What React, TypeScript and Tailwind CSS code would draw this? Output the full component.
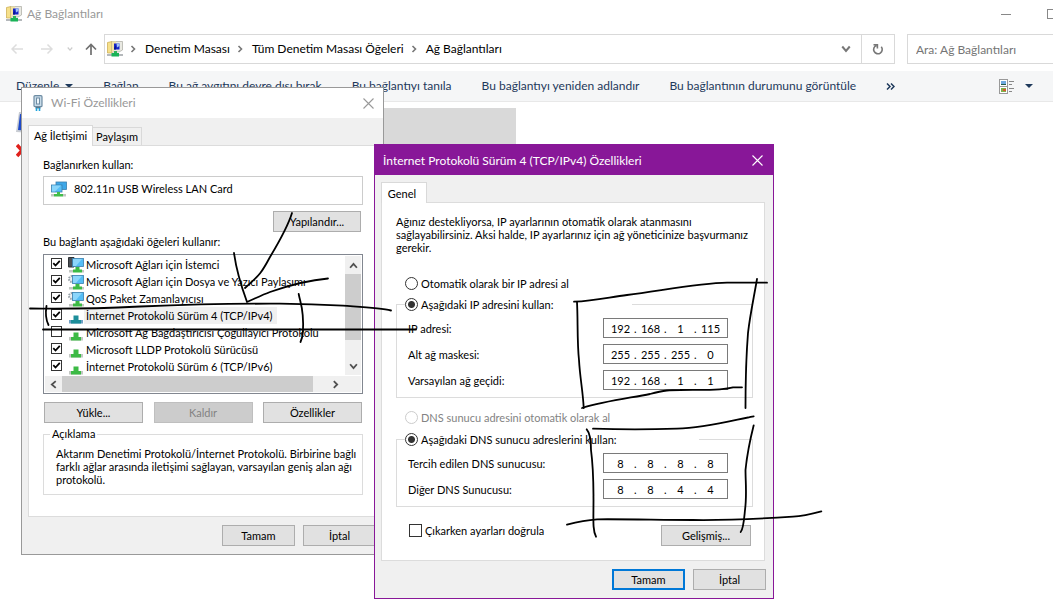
import { ReactNode, useId } from 'react';

const Chevron = ({ d, size = 8, className = '' }: { d: string; size?: number; className?: string }) => (
  <svg width={size} height={size} viewBox="0 0 8 8" fill="none" stroke="currentColor" strokeWidth="1.6" className={className}>
    <path d={d} />
  </svg>
);

const UP = 'M1 6L4 2.5L7 6';
const DOWN = 'M1 2L4 5.5L7 2';
const LEFT = 'M6 1L2.5 4L6 7';
const RIGHT = 'M2.5 1L5.5 4L2.5 7';

const FolderNetworkIcon = () => (
  <svg width="16" height="16" viewBox="0 0 16 16" className="shrink-0">
    <path d="M0.5 1.5L5 0.5V12H0.5Z" fill="#f6e08a" stroke="#c9a94a" strokeWidth="0.7" />
    <path d="M5 0.5H15.5V9L12 11H5Z" fill="#e9e9e2" stroke="#a9a9a0" strokeWidth="0.7" />
    <path d="M5 0.5H9V4L6 11H5Z" fill="#f3e3a0" />
    <rect x="7" y="2.5" width="5.5" height="6" fill="#1523c8" />
    <path d="M9.5 2.5H12.5V5L10 6.5Z" fill="#9fc0f5" />
    <path d="M7 7L9 4.5V8.5H7Z" fill="#0a1690" />
    <path d="M7 10H10V12.5H7Z" fill="#2fb457" />
    <rect x="0" y="13" width="16" height="2" fill="#b4b8bb" />
    <rect x="4.5" y="12" width="7.5" height="3.5" fill="#19b357" />
  </svg>
);

const MonitorsIcon = () => (
  <svg width="16" height="16" viewBox="0 0 16 16" className="shrink-0">
    <rect x="5" y="1" width="10.5" height="7.5" fill="#3da7e8" stroke="#3a7fae" strokeWidth="0.8" />
    <rect x="0.5" y="4" width="10.5" height="7" fill="#56bff7" stroke="#3a7fae" strokeWidth="0.8" />
    <path d="M1 4.5H10L4 10.5H1Z" fill="#8ad6fb" />
    <path d="M6 11H9V13H12V15.5H3V13H6Z" fill="#43bd4a" />
    <path d="M0 13H3V15.5H0ZM12 13H15V15.5H12Z" fill="#c3c7c3" />
  </svg>
);

const ClientIcon = ({ gear = false }: { gear?: boolean }) => (
  <svg width="16" height="16" viewBox="0 0 16 16" className="shrink-0">
    {gear ? (
      <circle cx="4" cy="5" r="3" fill="#eef1f3" stroke="#9aa3aa" strokeWidth="2" strokeDasharray="1.5 1" />
    ) : (
      <path d="M0.5 0.5H6V10H0.5Z" fill="#4a4f55" stroke="#2e3236" />
    )}
    <rect x="4.5" y="1.5" width="11" height="8" fill="#55bdf5" stroke="#3a7fae" strokeWidth="0.8" />
    <path d="M5 2H14L8 9H5Z" fill="#8cd6fb" />
    <path d="M7.5 10H11.5V12.5H14V15.5H5V12.5H7.5Z" fill="#3cba45" />
    <path d="M1 13H5V15.5H1ZM14 13H16V15.5H14Z" fill="#c3c7c3" />
  </svg>
);

const ProtocolIcon = ({ active = false }: { active?: boolean }) => (
  <svg width="16" height="16" viewBox="0 0 16 16" className="shrink-0">
    <rect x="1" y="12" width="14" height="3.5" fill={active ? '#6f9fc4' : '#c3c7c3'} />
    <path d="M5.5 7.5H10.5V12H13V15.5H3V12H5.5Z" fill={active ? '#1d8e9a' : '#3cba45'} />
  </svg>
);

const AdapterIcon = () => (
  <svg width="10" height="16" viewBox="0 0 10 16" className="shrink-0">
    <rect x="1" y="0.7" width="8" height="11" rx="1" fill="#c8dbe8" stroke="#6e8ca3" strokeWidth="1.2" />
    <rect x="3.5" y="3" width="3" height="6" fill="#eef6fb" stroke="#6e8ca3" />
    <path d="M2.5 12H7.5V13.5H2.5Z" fill="#54798f" />
    <path d="M3.5 13V16M6.5 13V16" stroke="#1ea4dc" strokeWidth="1.6" />
  </svg>
);

const CloseIcon = () => (
  <svg width="11" height="11" viewBox="0 0 11 11" stroke="currentColor" strokeWidth="1.1">
    <path d="M0.5 0.5L10.5 10.5M10.5 0.5L0.5 10.5" />
  </svg>
);

const PushButton = ({ children, className, disabled }: { children: ReactNode; className: string; disabled?: boolean }) => (
  <button
    type="button"
    className={`flex h-[21px] items-center justify-center border border-[#adadad] bg-[#e1e1e1] disabled:border-[#bfbfbf] disabled:bg-[#cccccc] disabled:text-[#838383] ${className}`}
    disabled={disabled}
  >
    {children}
  </button>
);

const CheckBox = ({ checked, id, className }: { checked?: boolean; id: string; className: string }) => (
  <span className={`relative block shrink-0 ${className}`}>
    <input id={id} type="checkbox" defaultChecked={checked} className="peer block size-full appearance-none border border-[#333] bg-white" />
    <svg viewBox="0 0 11 11" fill="none" stroke="#000" strokeWidth="1.8" className="pointer-events-none absolute inset-0 hidden peer-checked:block">
      <path d="M2.3 5.2L4.5 7.5L8.8 2.8" />
    </svg>
  </span>
);

const Radio = ({ label, name, checked, disabled }: { label: string; name: string; checked?: boolean; disabled?: boolean }) => (
  <label className={`flex h-4 items-center gap-[3px] whitespace-nowrap ${disabled ? 'text-[#838383]' : ''}`}>
    <input
      type="radio"
      name={name}
      defaultChecked={checked}
      disabled={disabled}
      className="size-[13px] shrink-0 appearance-none rounded-full border border-[#333] bg-white checked:bg-[radial-gradient(circle,#333_0_3px,#fff_4px)] disabled:border-[#ccc]"
    />
    {label}
  </label>
);

const AddressField = ({ label, octets }: { label: string; octets: number[] }) => (
  <div role="group" aria-label={label} className="flex h-5 items-center justify-between">
    <span>{label}</span>
    <div className="flex h-5 w-[125px] items-center border border-[#7a7a7a] bg-white pl-[3px]">
      {octets.map((octet, i) => (
        <span key={i} className="flex items-center">
          {i > 0 && <span className="w-[3px]">.</span>}
          <input aria-label={`${label} ${i + 1}`} defaultValue={octet} className="h-4 w-[27px] text-center outline-none" />
        </span>
      ))}
    </div>
  </div>
);

const commands = ['Bağlan', 'Bu ağ aygıtını devre dışı bırak', 'Bu bağlantıyı tanıla', 'Bu bağlantıyı yeniden adlandır', 'Bu bağlantının durumunu görüntüle'];

const Explorer = () => (
  <div className="w-[calc(100%+68px)] text-[12px]">
    <header className="flex h-7 items-center pl-[6px] text-[#999]">
      <FolderNetworkIcon />
      <h1 className="ml-[5px] flex-1">Ağ Bağlantıları</h1>
      <button type="button" aria-label="Simge durumuna küçült" className="flex w-[46px] justify-center">
        <span className="h-px w-[10px] bg-[#888]" />
      </button>
      <button type="button" aria-label="Ekranı kapla" className="flex w-[46px] justify-center">
        <span className="size-[10px] border border-[#888]" />
      </button>
      <button type="button" aria-label="Kapat" className="flex w-[46px] justify-center"><CloseIcon /></button>
    </header>

    {/* Address bar */}
    <div className="flex items-center pt-[6px] pb-[7px] pr-3 pl-[11px]">
      <button type="button" aria-label="Geri" className="text-[#ddd]">
        <svg width="12" height="12" viewBox="0 0 12 12" fill="none" stroke="currentColor" strokeWidth="1.5"><path d="M12 6H1M5.5 1.5L1 6L5.5 10.5" /></svg>
      </button>
      <button type="button" aria-label="İleri" className="ml-[18px] text-[#ddd]">
        <svg width="12" height="12" viewBox="0 0 12 12" fill="none" stroke="currentColor" strokeWidth="1.5"><path d="M0 6H11M6.5 1.5L11 6L6.5 10.5" /></svg>
      </button>
      <button type="button" aria-label="Son konumlar" className="ml-[14px] text-[#ccc]"><Chevron d={DOWN} size={6} /></button>
      <button type="button" aria-label="Yukarı" className="ml-[12px] text-[#707070]">
        <svg width="12" height="12" viewBox="0 0 12 12" fill="none" stroke="currentColor" strokeWidth="1.7"><path d="M6 12V1.5M1 6.5L6 1.5L11 6.5" /></svg>
      </button>
      <nav className="ml-[7px] flex h-[30px] flex-1 items-center border border-[#d9d9d9] pl-[2px] text-black">
        <FolderNetworkIcon />
        {['Denetim Masası', 'Tüm Denetim Masası Öğeleri', 'Ağ Bağlantıları'].map((crumb) => (
          <span key={crumb} className="flex items-center">
            <Chevron d={RIGHT} className="mr-2 ml-[6px] text-[#777]" />
            <a href="#" className="whitespace-nowrap">{crumb}</a>
          </span>
        ))}
        <button type="button" aria-label="Önceki konumlar" className="ml-auto mr-[10px] text-[#777]"><Chevron d={DOWN} size={10} /></button>
        <button type="button" aria-label="Yenile" className="flex h-full w-[33px] items-center justify-center border-l border-[#d9d9d9] text-[#777]">
          <svg width="12" height="12" viewBox="0 0 12 12" fill="none" stroke="currentColor" strokeWidth="1.6">
            <path d="M9.3 3.8A4.3 4.3 0 1 1 4.3 2.5M1.5 1.8H5.4V5.6" />
          </svg>
        </button>
      </nav>
      <input
        type="search"
        aria-label="Ara"
        placeholder="Ara: Ağ Bağlantıları"
        className="ml-3 h-[30px] w-[202px] border border-[#d9d9d9] px-2 outline-none placeholder:text-[#757575]"
      />
    </div>

    {/* Command bar */}
    <div className="flex h-[31px] items-center gap-[30px] border-b border-[#e8e8e8] bg-[#f5f6f7] pr-[88px] pl-4 text-[#1e395b]">
      <button type="button" className="flex items-center gap-[6px]">
        Düzenle
        <svg width="8" height="4" viewBox="0 0 8 4" fill="currentColor"><path d="M0 0H8L4 4Z" /></svg>
      </button>
      {commands.map((c) => (
        <button key={c} type="button" className="whitespace-nowrap">{c}</button>
      ))}
      <button type="button" aria-label="Diğer komutlar">
        <svg width="9" height="7" viewBox="0 0 9 7" fill="none" stroke="currentColor" strokeWidth="1.5"><path d="M1 0.5L4 3.5L1 6.5M5 0.5L8 3.5L5 6.5" /></svg>
      </button>
      <button type="button" aria-label="Görünüm" className="ml-auto flex items-center gap-[10px]">
        <svg width="16" height="15" viewBox="0 0 16 15">
          <rect x="0.5" y="0.5" width="8" height="14" fill="#fff" stroke="#999" />
          <path d="M0 7.5H9" stroke="#999" />
          <rect x="2" y="2" width="5" height="4" fill="#6fa8e0" />
          <path d="M2 5H7V6H2Z" fill="#245a48" />
          <rect x="2" y="9" width="5" height="4" fill="#7fb04a" />
          <path d="M4 10H7V12H4Z" fill="#d65a2c" />
          <path d="M10 2.5H15M10 5.5H13M10 9.5H15M10 12.5H13" stroke="#888" />
        </svg>
        <svg width="8" height="4" viewBox="0 0 8 4" fill="currentColor"><path d="M0 0H8L4 4Z" /></svg>
      </button>
    </div>

    {/* Connection tiles */}
    <div className="flex pt-[6px] pl-4">
      <svg width="54" height="52" viewBox="0 0 54 52">
        <path d="M3 4L30 6V26L0 24Z" fill="#c9cdd3" />
        <path d="M4 6L28 8V24L2 22Z" fill="#1d49c9" />
        <path d="M1 37L11 48M11 37L1 48" stroke="#e0201b" strokeWidth="3.5" />
      </svg>
      <div className="ml-[200px] h-[70px] w-[246px] bg-[#d9d9d9]" />
    </div>
  </div>
);

const items = [
  { name: 'Microsoft Ağları için İstemci', icon: <ClientIcon />, checked: true },
  { name: 'Microsoft Ağları için Dosya ve Yazıcı Paylaşımı', icon: <ClientIcon gear />, checked: true },
  { name: 'QoS Paket Zamanlayıcısı', icon: <ClientIcon gear />, checked: true },
  { name: 'İnternet Protokolü Sürüm 4 (TCP/IPv4)', icon: <ProtocolIcon active />, checked: true, selected: true },
  { name: 'Microsoft Ağ Bağdaştırıcısı Çoğullayıcı Protokolü', icon: <ProtocolIcon /> },
  { name: 'Microsoft LLDP Protokolü Sürücüsü', icon: <ProtocolIcon />, checked: true },
  { name: 'İnternet Protokolü Sürüm 6 (TCP/IPv6)', icon: <ProtocolIcon />, checked: true },
];

const WifiDialog = () => {
  const id = useId();
  return (
    <section className="absolute top-[87px] left-[21px] w-[363px] border border-[#999] bg-[#f0f0f0] text-[11px] leading-[14px] text-black">
      <header className="flex h-[30px] items-center bg-white pr-[9px] pl-[11px] text-[12px] text-[#999]">
        <AdapterIcon />
        <h2 className="ml-2 flex-1">Wi-Fi Özellikleri</h2>
        <button type="button" aria-label="Kapat"><CloseIcon /></button>
      </header>

      <div className="px-[6px] pt-[7px] pb-2">
        <div role="tablist" className="flex items-end">
          <button type="button" role="tab" aria-selected="true" className="z-10 -mb-px h-[21px] w-[65px] whitespace-nowrap border border-b-0 border-[#d9d9d9] bg-white">Ağ İletişimi</button>
          <button type="button" role="tab" aria-selected="false" className="h-[18px] w-[49px] border border-b-0 border-l-0 border-[#d9d9d9]">Paylaşım</button>
        </div>
        <div className="border border-[#dcdcdc] bg-white pt-3 pr-[13px] pb-[21px] pl-[14px]">
          <label htmlFor={`${id}-nic`} className="block">Bağlanırken kullan:</label>
          <div className="mt-1 flex h-[29px] items-center gap-[7px] border border-[#ccc] pb-1 pl-[7px]">
            <MonitorsIcon />
            <input id={`${id}-nic`} readOnly defaultValue="802.11n USB Wireless LAN Card" className="flex-1 outline-none" />
          </div>
          <PushButton className="mt-[6px] mr-[2px] ml-auto w-[88px]">Yapılandır...</PushButton>
          <p className="mt-[3px]">Bu bağlantı aşağıdaki öğeleri kullanır:</p>

          <div className="mt-[5px] border border-[#828790] p-px">
            <div className="flex">
              <ul className="flex-1 pl-[6px]">
                {items.map((item, i) => (
                  <li key={item.name} className="flex h-[17px] items-center">
                    <CheckBox id={`${id}-${i}`} checked={item.checked} className="mb-[2px] size-[11px]" />
                    <span className="ml-[6px] flex">{item.icon}</span>
                    <label htmlFor={`${id}-${i}`} className={`h-[17px] whitespace-nowrap px-[2px] pt-[2px] ${item.selected ? 'bg-[#f0f0f0] pr-[5px]' : ''}`}>{item.name}</label>
                  </li>
                ))}
              </ul>
              <div className="flex w-4 flex-col items-center bg-[#f0f0f0] text-[#505050]">
                <span className="flex h-[18px] items-center"><Chevron d={UP} size={9} /></span>
                <div className="h-[66px] w-full bg-[#cdcdcd]" />
                <span className="mt-auto flex h-[18px] items-center"><Chevron d={DOWN} size={9} /></span>
              </div>
            </div>
            <div className="mt-px flex h-4 items-center bg-[#f0f0f0] text-[#505050]">
              <span className="flex w-[17px] justify-center"><Chevron d={LEFT} size={9} /></span>
              <div className="h-4 w-[251px] bg-[#cdcdcd]" />
              <Chevron d={RIGHT} size={9} className="ml-[18px]" />
            </div>
          </div>

          <div className="mt-2 flex justify-between px-px">
            <PushButton className="w-[99px]">Yükle...</PushButton>
            <PushButton className="w-[99px]" disabled>Kaldır</PushButton>
            <PushButton className="w-[99px]">Özellikler</PushButton>
          </div>

          <fieldset className="mt-1 min-w-0 border border-[#dcdcdc] px-3 pt-[6px] pb-2 leading-[13px] whitespace-nowrap">
            <legend className="-ml-[6px] h-[14px] px-[2px]">Açıklama</legend>
            Aktarım Denetimi Protokolü/İnternet Protokolü. Birbirine bağlı<br />
            farklı ağlar arasında iletişimi sağlayan, varsayılan geniş alan ağı<br />
            protokolü.
          </fieldset>
        </div>
        <div className="mt-2 flex justify-end gap-2 pr-px">
          <PushButton className="w-[73px]">Tamam</PushButton>
          <PushButton className="w-[73px]">İptal</PushButton>
        </div>
      </div>
    </section>
  );
};

const Ipv4Dialog = () => {
  const id = useId();
  return (
    <section className="absolute top-[144px] left-[374px] w-[400px] border border-[#881798] bg-[#f0f0f0] text-[11px] leading-[13px] text-black">
      <header className="flex h-[30px] items-center bg-[#881798] pr-[10px] pl-2 text-[12px] text-white">
        <h2 className="flex-1">İnternet Protokolü Sürüm 4 (TCP/IPv4) Özellikleri</h2>
        <button type="button" aria-label="Kapat"><CloseIcon /></button>
      </header>

      <div className="pt-[7px] pr-[7px] pb-2 pl-[6px]">
        <div role="tablist" className="flex">
          <button type="button" role="tab" aria-selected="true" className="z-10 -mb-px h-[21px] w-[46px] border border-b-0 border-[#d9d9d9] bg-white pr-1">Genel</button>
        </div>
        <div className="mr-px border border-[#dcdcdc] bg-white pt-3 pr-[11px] pb-[14px] pl-[14px]">
          <p className="whitespace-nowrap">
            Ağınız destekliyorsa, IP ayarlarının otomatik olarak atanmasını<br />
            sağlayabilirsiniz. Aksi halde, IP ayarlarınız için ağ yöneticinize başvurmanız<br />
            gerekir.
          </p>

          <div className="mt-[21px] pl-[9px]">
            <Radio name={`${id}-ip`} label="Otomatik olarak bir IP adresi al" />
          </div>
          <fieldset className="mt-[5px] border border-[#dcdcdc] pt-[5px] pr-6 pb-[7px] pl-[11px]">
            <legend className="-ml-[3px] h-[17px] w-[227px]">
              <Radio name={`${id}-ip`} label="Aşağıdaki IP adresini kullan:" checked />
            </legend>
            <div className="flex flex-col gap-[6px]">
              <AddressField label="IP adresi:" octets={[192, 168, 1, 115]} />
              <AddressField label="Alt ağ maskesi:" octets={[255, 255, 255, 0]} />
              <AddressField label="Varsayılan ağ geçidi:" octets={[192, 168, 1, 1]} />
            </div>
          </fieldset>

          <div className="mt-[11px] pl-[9px]">
            <Radio name={`${id}-dns`} label="DNS sunucu adresini otomatik olarak al" disabled />
          </div>
          <fieldset className="mt-[6px] border border-[#dcdcdc] pt-[5px] pr-6 pb-[7px] pl-[11px]">
            <legend className="-ml-[3px] h-[17px] w-[294px]">
              <Radio name={`${id}-dns`} label="Aşağıdaki DNS sunucu adreslerini kullan:" checked />
            </legend>
            <div className="flex flex-col gap-[6px]">
              <AddressField label="Tercih edilen DNS sunucusu:" octets={[8, 8, 8, 8]} />
              <AddressField label="Diğer DNS Sunucusu:" octets={[8, 8, 4, 4]} />
            </div>
          </fieldset>

          <div className="mt-[17px] flex items-start justify-between pr-[2px] pl-[13px]">
            <div className="flex items-center gap-[3px]">
              <CheckBox id={`${id}-check`} className="size-[13px]" />
              <label htmlFor={`${id}-check`}>Çıkarken ayarları doğrula</label>
            </div>
            <PushButton className="mt-px w-[90px]">Gelişmiş...</PushButton>
          </div>
        </div>
        <div className="mt-2 flex justify-end gap-2">
          <button type="button" className="flex h-[21px] w-[73px] items-center justify-center border-2 border-[#0078d7] bg-[#e1e1e1]">Tamam</button>
          <PushButton className="w-[73px]">İptal</PushButton>
        </div>
      </div>
    </section>
  );
};

// Freehand pen strokes drawn over the desktop
const strokes = [
  'M292 213C288 226 276 247 270 257C262 272 260 275 245 288',
  'M234 253C236 268 239 280 247 302C254 299 262 295 270 292C290 285 310 280 328 278.5',
  'M30 308.5C60 309 100 308.5 140 306.5C190 304.5 230 303.5 280 303.7C310 304 330 305 343 305.7C360 307 380 308 391 310.5',
  'M43 329.5H416',
  'M46.5 306C45.5 312 46 320 48.5 325',
  'M298.7 294C300 301 302 305 302.7 315C303.5 325 303.5 336 300.5 342',
  'M574 301.7C595 301 610 297 627 295C665 290 700 283 727 282.7H767',
  'M577 302C578 320 577 342 579 360C580 378 583 392 583.7 408',
  'M582 408C605 401 630 398 650 394C665 390 670 390 680 390C700 389.5 720 391 733 387.3H742',
  'M757 279C754 297 750 315 748 333C746 358 745.5 382 745.5 408',
  'M593 428.7C620 429.5 650 429.5 677 428.7C705 428 730 421 753.7 416.3',
  'M586.7 429.3C590 433 591 440 591 450C593 465 593.5 485 593.5 500C593.5 520 592.5 530 596 536.7',
  'M753.7 425.3C750 440 747 455 745.5 470C745.5 482 747 495 745 510C744 520 743.5 529 740.7 532',
  'M567 524.7C577 522 586 520 597 519.3C630 519 660 520 693 520C730 520.5 765 518.5 793 516.7C803 516 813 513.5 821.3 511.3',
];

const Ink = () => (
  <svg width="840" height="560" className="pointer-events-none absolute top-0 left-0" fill="none" stroke="#000" strokeWidth="1.8" strokeLinecap="round" strokeLinejoin="round">
    {strokes.map((d) => (
      <path key={d} d={d} />
    ))}
  </svg>
);

export default function App() {
  return (
    <main className="relative min-h-screen overflow-hidden bg-white font-['Lato',sans-serif]">
      <Explorer />
      <WifiDialog />
      <Ipv4Dialog />
      <Ink />
    </main>
  );
}
